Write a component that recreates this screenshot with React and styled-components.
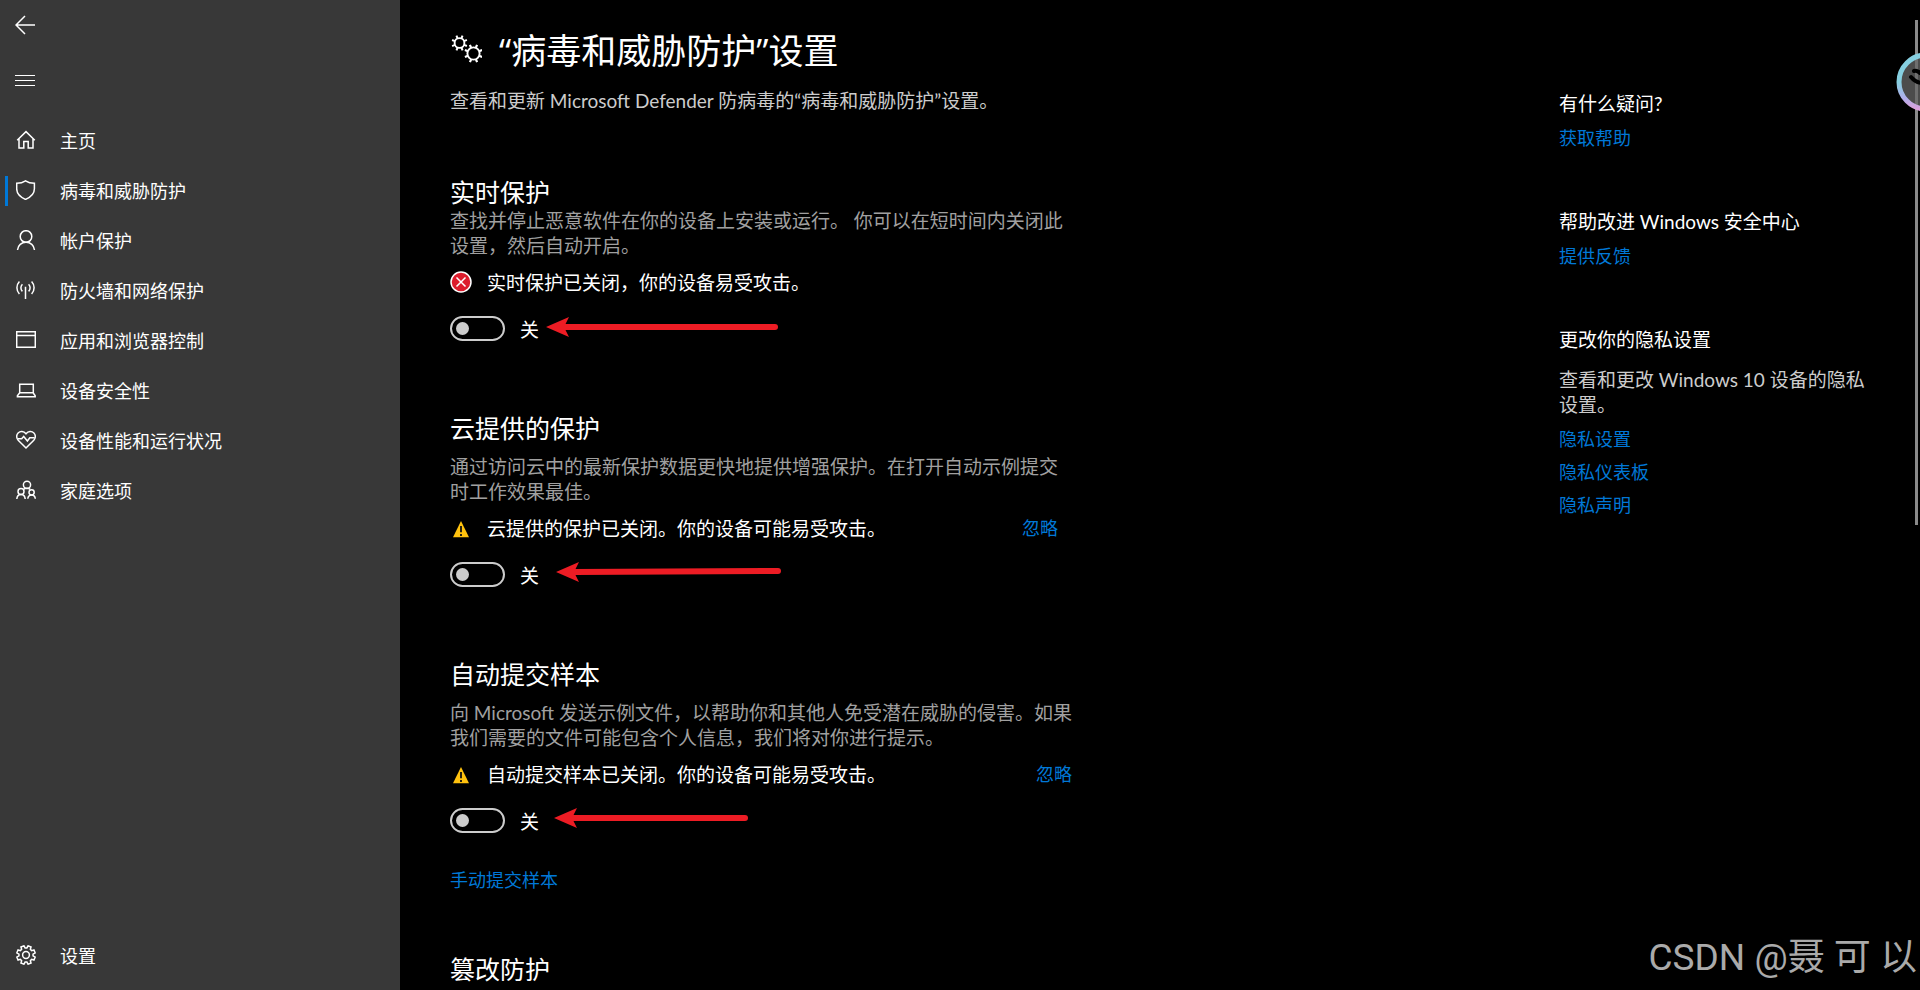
import { useState } from "react";
import styled, { createGlobalStyle } from "styled-components";

const GlobalStyle = createGlobalStyle`
  * {
    box-sizing: border-box;
  }
  body {
    margin: 0;
    background: #000;
    color: #fff;
    font-family: Lato, "Noto Sans CJK SC", sans-serif;
    font-size: 19px;
    line-height: 25px;
  }
  h1, h2, h3, p {
    margin: 0;
    font-weight: 400;
  }
`;

// Outline icons for the sidebar, all drawn on a 20px grid
const icons = {
  home: (
    <path d="M1.2 10.2 10 1.6l8.8 8.6M3 8.8v9.1h4.8v-6.4h4.4v6.4H17V8.8" />
  ),
  shield: (
    <path d="M9.5.8c2.6 1.7 5.4 2.4 8.9 2.4v5.6c0 5-3.6 8.4-8.9 10.6C4.2 17.2.7 13.8.7 8.8V3.2C4.1 3.2 7 2.5 9.5.8z" />
  ),
  person: (
    <>
      <circle cx="10" cy="6.5" r="5.8" />
      <path d="M1.5 20c.4-4.6 4-7.7 8.5-7.7s8.1 3.1 8.5 7.7" />
    </>
  ),
  network: (
    <path d="M9.5 6.8V19M3.4 1.5C.1 5 .1 10.6 3.4 14.1M15.6 1.5c3.3 3.5 3.3 9.1 0 12.6M6.4 4.2c-2 2-2 5.2 0 7.2M12.6 4.2c2 2 2 5.2 0 7.2" />
  ),
  window: <path d="M.7 1.7h18.6v15.6H.7zM.7 5.5h18.6" />,
  laptop: <path d="M3.7 4.2h13.6v8.6H3.7zM3.7 12.8l-2.3 3v.9h17.8v-.9l-2.1-3" />,
  heart: (
    <>
      <path d="M10 18 2.2 10.2C.2 8 .2 4.8 2.1 3 4.3.9 7.7 1.1 10 3.8c2.3-2.7 5.7-2.9 7.9-.8 1.9 1.8 1.9 5-.1 7.2z" />
      <path d="M1.8 8.8h3.9l2-2.3 3.7 4.5 2.4-3.2h4.8" />
    </>
  ),
  family: (
    <>
      <circle cx="11" cy="4.8" r="3.6" />
      <circle cx="5" cy="11.5" r="3" />
      <circle cx="15.6" cy="12.3" r="2.6" />
      <path d="M.8 19c.2-2.7 1.9-4.5 4.2-4.5s4 1.8 4.2 4.5M11.8 18.8c.2-2.3 1.7-3.9 3.8-3.9s3.5 1.6 3.7 3.9M7.3 9.5c.9-.8 2.2-1.2 3.7-1.2 1.2 0 2.3.4 3.2 1.1" />
    </>
  ),
};

const gearPath = (cx, cy, r, depth, teeth) => {
  const points = [];
  const step = (Math.PI * 2) / teeth;
  const corners = [[-0.34, r - depth], [-0.22, r], [0.22, r], [0.34, r - depth]];
  for (let i = 0; i < teeth; i++) {
    corners.forEach(([offset, radius]) => {
      const angle = step * (i + 0.5 + offset);
      points.push(
        `${(cx + radius * Math.cos(angle)).toFixed(2)} ${(cy + radius * Math.sin(angle)).toFixed(2)}`
      );
    });
  }
  return `M${points.join("L")}Z`;
};

const spokes = (cx, cy, from, to, count, turn) => {
  let d = "";
  for (let i = 0; i < count; i++) {
    const a = turn + (Math.PI * 2 * i) / count;
    const x = Math.cos(a);
    const y = Math.sin(a);
    d += `M${(cx + from * x).toFixed(2)} ${(cy + from * y).toFixed(2)}L${(cx + to * x).toFixed(2)} ${(cy + to * y).toFixed(2)}`;
  }
  return d;
};

const navItems = [
  { id: "home", label: "主页" },
  { id: "shield", label: "病毒和威胁防护" },
  { id: "person", label: "帐户保护" },
  { id: "network", label: "防火墙和网络保护" },
  { id: "window", label: "应用和浏览器控制" },
  { id: "laptop", label: "设备安全性" },
  { id: "heart", label: "设备性能和运行状况" },
  { id: "family", label: "家庭选项" },
];

const helpGroups = [
  { title: "有什么疑问?", links: ["获取帮助"] },
  { title: "帮助改进 Windows 安全中心", links: ["提供反馈"] },
  {
    title: "更改你的隐私设置",
    text: "查看和更改 Windows 10 设备的隐私设置。",
    links: ["隐私设置", "隐私仪表板", "隐私声明"],
  },
];

const sections = [
  {
    id: "realtime",
    title: "实时保护",
    lines: [
      "查找并停止恶意软件在你的设备上安装或运行。 你可以在短时间内关闭此",
      "设置，然后自动开启。",
    ],
    status: "实时保护已关闭，你的设备易受攻击。",
    level: "error",
    tight: true,
    arrow: { left: 96, top: 0, length: 232, rise: 0 },
  },
  {
    id: "cloud",
    title: "云提供的保护",
    lines: [
      "通过访问云中的最新保护数据更快地提供增强保护。在打开自动示例提交",
      "时工作效果最佳。",
    ],
    status: "云提供的保护已关闭。你的设备可能易受攻击。",
    level: "warning",
    arrow: { left: 106, top: -1, length: 225, rise: 1 },
  },
  {
    id: "sample",
    title: "自动提交样本",
    lines: [
      "向 Microsoft 发送示例文件，以帮助你和其他人免受潜在威胁的侵害。如果",
      "我们需要的文件可能包含个人信息，我们将对你进行提示。",
    ],
    status: "自动提交样本已关闭。你的设备可能易受攻击。",
    level: "warning",
    arrow: { left: 104, top: -1, length: 194, rise: 0 },
    link: "手动提交样本",
  },
];

function StatusIcon({ level }) {
  if (level === "error") {
    return (
      <svg width="22" height="22" viewBox="0 0 22 22" aria-hidden="true">
        <circle cx="11" cy="11" r="10" fill="#dc1c2c" stroke="#fff" strokeWidth="1.5" />
        <path d="M6.5 6.5l9 9M15.5 6.5l-9 9" stroke="#fff" strokeWidth="1.5" />
      </svg>
    );
  }
  return (
    <svg width="22" height="22" viewBox="0 0 22 22" aria-hidden="true">
      <path d="M11 4 19 20.3H3z" fill="#ffc20e" />
      <path d="M11 9v6.2M11 17v2" stroke="#111" strokeWidth="1.8" />
    </svg>
  );
}

function Arrow({ left, top, length, rise }) {
  return (
    <ArrowSvg $left={left} $top={top} width={length} height="22" viewBox={`0 0 ${length} 22`} aria-hidden="true">
      <path d={`M18 11L${length - 3} ${11 - rise}`} stroke="#ed1c24" strokeWidth="6" strokeLinecap="round" />
      <path d="M0 11 23 1 18 11 23 21z" fill="#ed1c24" />
    </ArrowSvg>
  );
}

function Section({ section }) {
  const [on, setOn] = useState(false);

  return (
    <SectionBlock>
      <SectionTitle>{section.title}</SectionTitle>
      <SectionBody $tight={section.tight}>
        <Description>
          {section.lines[0]}
          <br />
          {section.lines[1]}
        </Description>
        <StatusRow>
          <StatusIcon level={section.level} />
          <span>{section.status}</span>
          {section.level === "warning" && <Dismiss type="button">忽略</Dismiss>}
        </StatusRow>
      </SectionBody>
      <ToggleRow>
        <Toggle
          type="checkbox"
          role="switch"
          id={section.id}
          aria-label={section.title}
          checked={on}
          onChange={(event) => setOn(event.target.checked)}
        />
        <ToggleLabel htmlFor={section.id}>{on ? "开" : "关"}</ToggleLabel>
        <Arrow {...section.arrow} />
      </ToggleRow>
      {section.link && <SectionLink href="#submit">{section.link}</SectionLink>}
    </SectionBlock>
  );
}

function App() {
  return (
    <Shell>
      <GlobalStyle />
      <Sidebar>
        <IconButton type="button" aria-label="返回">
          <svg width="20" height="20" viewBox="0 0 20 20" aria-hidden="true">
            <path d="M20 10H1M10 1 1 10l9 9" fill="none" stroke="#fff" strokeWidth="1.5" />
          </svg>
        </IconButton>
        <IconButton type="button" aria-label="菜单">
          <svg width="20" height="20" viewBox="0 0 20 20" aria-hidden="true">
            <path d="M0 5.5h20M0 10.5h20M0 15.5h20" stroke="#fff" strokeWidth="1" />
          </svg>
        </IconButton>
        <Nav>
          {navItems.map((item) => (
            <NavLink key={item.id} href={`#${item.id}`} $active={item.id === "shield"}>
              <NavIcon viewBox="0 0 20 20" aria-hidden="true">{icons[item.id]}</NavIcon>
              {item.label}
            </NavLink>
          ))}
          <NavLink href="#settings" $last>
            <NavIcon viewBox="0 0 20 20" aria-hidden="true">
              <path d={gearPath(10, 10, 9.4, 2.3, 8)} />
              <circle cx="10" cy="10" r="3.4" />
            </NavIcon>
            设置
          </NavLink>
        </Nav>
      </Sidebar>
      <Main>
        <Content>
          <TitleRow>
            <svg width="32" height="32" viewBox="0 0 32 32" fill="none" stroke="#fff" aria-hidden="true">
              <circle cx="9.5" cy="8" r="4.9" strokeWidth="1.9" />
              <path d={spokes(9.5, 8, 5, 8, 8, 0.39)} strokeWidth="2" />
              <circle cx="23.5" cy="18.5" r="6.1" strokeWidth="1.9" />
              <path d={spokes(23.5, 18.5, 6, 9.3, 8, 0.39)} strokeWidth="2.2" />
            </svg>
            <Title>“病毒和威胁防护”设置</Title>
          </TitleRow>
          <Subtitle>查看和更新 Microsoft Defender 防病毒的“病毒和威胁防护”设置。</Subtitle>
          {sections.map((section) => (
            <Section key={section.id} section={section} />
          ))}
          <SectionTitle>篡改防护</SectionTitle>
        </Content>
        <Aside>
          {helpGroups.map((group) => (
            <HelpGroup key={group.title}>
              <HelpTitle>{group.title}</HelpTitle>
              {group.text && <HelpText>{group.text}</HelpText>}
              <HelpLinks>
                {group.links.map((link) => (
                  <TextLink key={link} href="#help">{link}</TextLink>
                ))}
              </HelpLinks>
            </HelpGroup>
          ))}
        </Aside>
      </Main>
      <ScrollThumb />
      <Badge viewBox="0 0 60 60" aria-hidden="true">
        <defs>
          <linearGradient id="ring" x1="0" y1="0" x2="0" y2="1">
            <stop offset="0.5" stopColor="#86cfe0" />
            <stop offset="0.8" stopColor="#b0aeea" />
            <stop offset="1" stopColor="#dca0dc" />
          </linearGradient>
        </defs>
        <circle cx="30" cy="30" r="27" fill="#666" fillOpacity="0.75" stroke="url(#ring)" strokeWidth="5" />
        <path d="M18 19q3-1 6 2M15 25q4 5 10 6M26 37v6" fill="none" stroke="#000" strokeWidth="4" strokeLinecap="round" />
      </Badge>
      <Watermark>CSDN @聂 可 以</Watermark>
    </Shell>
  );
}

const Shell = styled.div`
  position: relative;
  display: flex;
  height: 100vh;
  overflow: hidden;
`;

const Sidebar = styled.aside`
  display: flex;
  flex-direction: column;
  flex: 0 0 400px;
  padding-bottom: 9px;
  background: #383838;
`;

const IconButton = styled.button`
  display: flex;
  align-items: center;
  width: 50px;
  height: 50px;
  margin-bottom: 5px;
  padding: 0 15px;
  border: 0;
  background: none;
`;

const Nav = styled.nav`
  display: flex;
  flex: 1;
  flex-direction: column;
  padding-top: 6px;
`;

const NavLink = styled.a`
  display: flex;
  align-items: center;
  gap: 24px;
  height: 50px;
  margin-top: ${(props) => (props.$last ? "auto" : "0")};
  margin-left: 5px;
  padding-left: 8px;
  border-left: 3px solid transparent;
  color: #fff;
  font-size: 18px;
  text-decoration: none;
  background: linear-gradient(#0078d7, #0078d7) no-repeat -3px center / ${(props) => (props.$active ? "3px" : "0")} 30px;
  background-origin: padding-box;
  background-clip: border-box;
`;

const NavIcon = styled.svg`
  flex: none;
  width: 20px;
  height: 20px;
  margin-bottom: 2px;
  fill: none;
  stroke: #fff;
  stroke-width: 1.5;
`;

const Main = styled.main`
  display: flex;
  flex: 1;
  justify-content: space-between;
  padding-left: 50px;
`;

const Content = styled.div`
  padding-top: 26px;
`;

const TitleRow = styled.div`
  display: flex;
  align-items: center;
  gap: 17px;
  height: 50px;
`;

const Title = styled.h1`
  font-family: "Open Sans", "Noto Sans CJK SC", sans-serif;
  font-size: 35px;
  line-height: 50px;
`;

const Subtitle = styled.p`
  margin: 12px 0 64px;
  color: #ccc;
`;

const SectionBlock = styled.section`
  margin-bottom: 72px;

  &:last-of-type {
    margin-bottom: 62px;
  }
`;

const SectionTitle = styled.h2`
  font-size: 25px;
  line-height: 30px;
`;

const SectionBody = styled.div`
  width: fit-content;
  margin-top: ${(props) => (props.$tight ? "1px" : "11px")};
`;

const Description = styled.p`
  color: #a0a0a0;
`;

const StatusRow = styled.div`
  display: flex;
  align-items: center;
  gap: 15px;
  height: 26px;
  margin-top: 11px;
`;

const Dismiss = styled.button`
  margin-left: auto;
  padding: 0;
  border: 0;
  background: none;
  color: #0078d7;
  font: inherit;
  font-size: 18px;
`;

const ToggleRow = styled.div`
  position: relative;
  display: flex;
  align-items: center;
  gap: 15px;
  height: 25px;
  margin-top: 21px;
`;

const Toggle = styled.input`
  display: flex;
  align-items: center;
  appearance: none;
  width: 55px;
  height: 25px;
  margin: 0;
  padding: 0 4px;
  border: 2px solid #ccc;
  border-radius: 13px;

  &::before {
    content: "";
    width: 13px;
    height: 13px;
    border-radius: 50%;
    background: #ccc;
  }

  &:checked {
    justify-content: flex-end;
    border-color: #0078d7;
    background: #0078d7;
  }
`;

const ToggleLabel = styled.label`
  padding-top: 2px;
`;

const ArrowSvg = styled.svg`
  position: absolute;
  left: ${(props) => props.$left}px;
  top: ${(props) => props.$top}px;
`;

const TextLink = styled.a`
  color: #0078d7;
  font-size: 18px;
  line-height: 24px;
  text-decoration: none;
`;

const SectionLink = styled(TextLink)`
  display: block;
  width: fit-content;
  margin-top: 35px;
`;

const Aside = styled.aside`
  display: flex;
  flex-direction: column;
  gap: 59px;
  width: 361px;
  padding: 91px 50px 0 0;
`;

const HelpGroup = styled.div`
  display: flex;
  flex-direction: column;
`;

const HelpTitle = styled.h3`
  font-size: 19px;
`;

const HelpText = styled.p`
  margin-top: 15px;
  color: #ccc;
`;

const HelpLinks = styled.div`
  display: flex;
  flex-direction: column;
  align-items: flex-start;
  gap: 9px;
  margin-top: 10px;
`;

const ScrollThumb = styled.div`
  position: absolute;
  top: 20px;
  right: 2px;
  width: 3px;
  height: 51%;
  background: #8a8a8a;
`;

const Badge = styled.svg`
  position: absolute;
  top: 52px;
  right: -36px;
  width: 60px;
  height: 60px;
`;

const Watermark = styled.div`
  position: absolute;
  right: 3px;
  bottom: 8px;
  color: #aaa;
  font-family: Roboto, "Noto Sans CJK SC", sans-serif;
  font-size: 37px;
  line-height: 48px;
  white-space: nowrap;
`;

export default App;
